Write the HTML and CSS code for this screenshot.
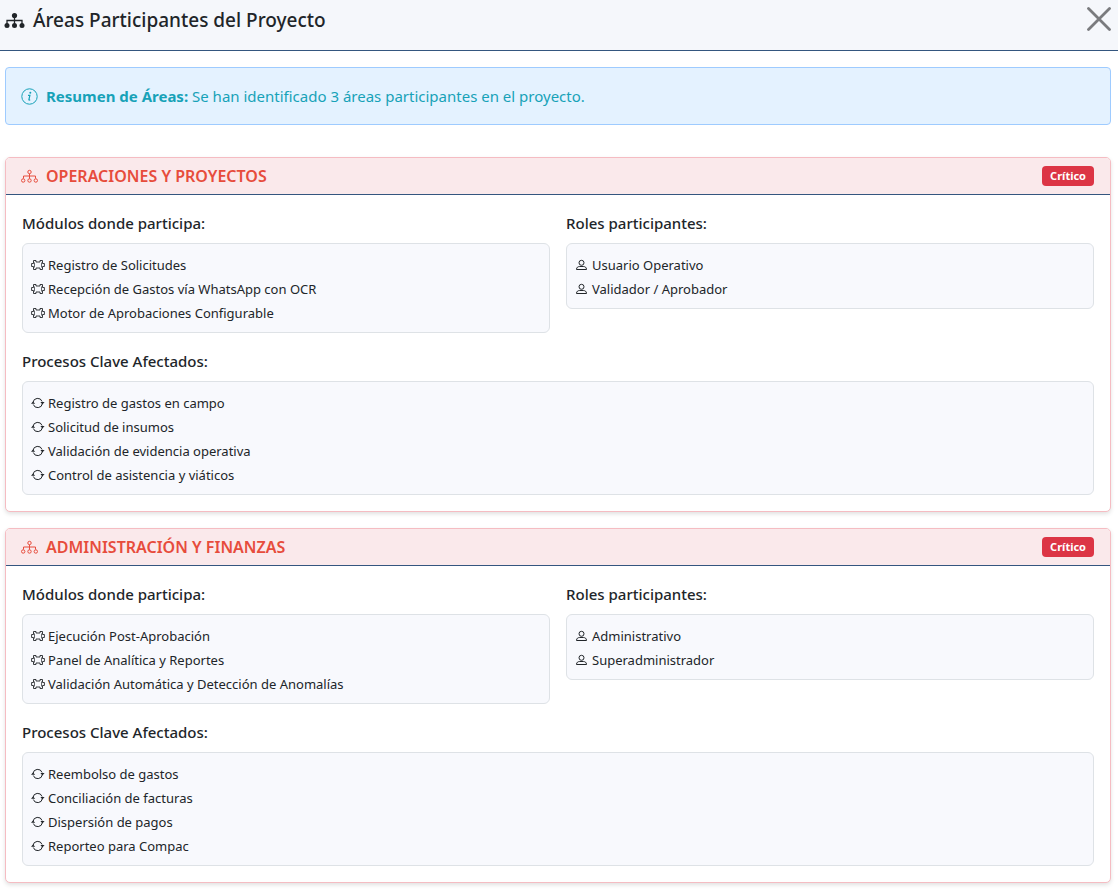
FILE: index.html
```html
<!DOCTYPE html>
<html lang="es">
<head>
<meta charset="UTF-8">
<meta name="viewport" content="width=device-width, initial-scale=1.0">
<title>Áreas Participantes del Proyecto</title>
<link rel="stylesheet" href="styles.css">
</head>
<body>

<!-- Shared icons -->
<svg class="sprite" aria-hidden="true">
  <symbol id="sitemap" viewBox="0 0 17 14">
    <g fill="none" stroke="currentColor">
      <circle cx="8.5" cy="2.5" r="1.7"/>
      <circle cx="2.2" cy="11" r="1.7"/>
      <circle cx="8.5" cy="11" r="1.7"/>
      <circle cx="14.8" cy="11" r="1.7"/>
      <path d="M8.5 4.2v5M2.5 9V6.5h12V9"/>
    </g>
  </symbol>
  <symbol id="chip" viewBox="0 0 14 14">
    <path fill="none" stroke="currentColor" stroke-width="0.9" d="M2.5 5.500V2.500h2.500v1.500h4V2.500h2.500v3h1.900v3h-1.900v3H9V10H5v1.500H2.500v-3H.6v-3z"/>
    <path fill="none" stroke="currentColor" stroke-width="0.7" d="M3.500 4.500v5M10.500 4.500v5"/>
  </symbol>
  <symbol id="user" viewBox="0 0 14 14">
    <circle cx="6.5" cy="4.8" r="2.5" fill="none" stroke="currentColor"/>
    <path fill="none" stroke="currentColor" stroke-linejoin="round" d="M1.500 11.500c0-2.300 1.600-3 3.200-3h3.600c1.600 0 3.200.7 3.200 3z"/>
  </symbol>
  <symbol id="refresh" viewBox="0 0 14 14">
    <path fill="none" stroke="currentColor" d="M2 6.500a4.700 4.700 0 0 1 9.100-1M11.400 7.500a4.700 4.700 0 0 1-9.100 1"/>
    <path fill="currentColor" d="M0 7.800h4.200L2 5.500zM9.400 6h4.200l-2.200 2.500z"/>
  </symbol>
</svg>

<header class="modal-header">
  <h1 class="modal-title">
    <svg class="title-icon" viewBox="0 0 21 17" aria-hidden="true">
      <g fill="currentColor">
        <circle cx="10.5" cy="3.5" r="2.6"/>
        <circle cx="3" cy="13.5" r="2.5"/>
        <circle cx="10.5" cy="13.5" r="2.5"/>
        <circle cx="18" cy="13.5" r="2.5"/>
      </g>
      <path fill="none" stroke="currentColor" stroke-width="1.3" d="M10.500 3v10M3 13V8.500h15V13"/>
    </svg>
    Áreas Participantes del Proyecto
  </h1>
  <button type="button" class="btn-close" aria-label="Cerrar">
    <svg viewBox="0 0 24 24" aria-hidden="true"><path fill="none" stroke="currentColor" stroke-width="2.800" stroke-linecap="round" d="M1.500 1.500l21 21M22.500 1.500l-21 21"/></svg>
  </button>
</header>

<main class="modal-body">
  <div class="alert">
    <svg class="icon" viewBox="0 0 17 17" aria-hidden="true">
      <circle cx="8.5" cy="8.5" r="7.7" fill="none" stroke="currentColor"/>
      <circle cx="9.3" cy="4.7" r="1" fill="currentColor"/>
      <path fill="none" stroke="currentColor" stroke-width="1.2" d="M7 7.300h1.900l-1 4.300c-.1.700.5.700 1.300.2"/>
    </svg>
    <p><strong>Resumen de Áreas:</strong> Se han identificado 3 áreas participantes en el proyecto.</p>
  </div>

  <section class="card">
    <div class="card-header">
      <svg class="icon" aria-hidden="true"><use href="#sitemap"/></svg>
      <h2>OPERACIONES Y PROYECTOS</h2>
      <span class="badge">Crítico</span>
    </div>
    <div class="card-body">
      <div>
        <h3>Módulos donde participa:</h3>
        <ul class="list">
          <li><svg aria-hidden="true"><use href="#chip"/></svg>Registro de Solicitudes</li>
          <li><svg aria-hidden="true"><use href="#chip"/></svg>Recepción de Gastos vía WhatsApp con OCR</li>
          <li><svg aria-hidden="true"><use href="#chip"/></svg>Motor de Aprobaciones Configurable</li>
        </ul>
      </div>
      <div>
        <h3>Roles participantes:</h3>
        <ul class="list">
          <li><svg aria-hidden="true"><use href="#user"/></svg>Usuario Operativo</li>
          <li><svg aria-hidden="true"><use href="#user"/></svg>Validador / Aprobador</li>
        </ul>
      </div>
      <div class="full">
        <h3>Procesos Clave Afectados:</h3>
        <ul class="list">
          <li><svg aria-hidden="true"><use href="#refresh"/></svg>Registro de gastos en campo</li>
          <li><svg aria-hidden="true"><use href="#refresh"/></svg>Solicitud de insumos</li>
          <li><svg aria-hidden="true"><use href="#refresh"/></svg>Validación de evidencia operativa</li>
          <li><svg aria-hidden="true"><use href="#refresh"/></svg>Control de asistencia y viáticos</li>
        </ul>
      </div>
    </div>
  </section>

  <section class="card">
    <div class="card-header">
      <svg class="icon" aria-hidden="true"><use href="#sitemap"/></svg>
      <h2>ADMINISTRACIÓN Y FINANZAS</h2>
      <span class="badge">Crítico</span>
    </div>
    <div class="card-body">
      <div>
        <h3>Módulos donde participa:</h3>
        <ul class="list">
          <li><svg aria-hidden="true"><use href="#chip"/></svg>Ejecución Post-Aprobación</li>
          <li><svg aria-hidden="true"><use href="#chip"/></svg>Panel de Analítica y Reportes</li>
          <li><svg aria-hidden="true"><use href="#chip"/></svg>Validación Automática y Detección de Anomalías</li>
        </ul>
      </div>
      <div>
        <h3>Roles participantes:</h3>
        <ul class="list">
          <li><svg aria-hidden="true"><use href="#user"/></svg>Administrativo</li>
          <li><svg aria-hidden="true"><use href="#user"/></svg>Superadministrador</li>
        </ul>
      </div>
      <div class="full">
        <h3>Procesos Clave Afectados:</h3>
        <ul class="list">
          <li><svg aria-hidden="true"><use href="#refresh"/></svg>Reembolso de gastos</li>
          <li><svg aria-hidden="true"><use href="#refresh"/></svg>Conciliación de facturas</li>
          <li><svg aria-hidden="true"><use href="#refresh"/></svg>Dispersión de pagos</li>
          <li><svg aria-hidden="true"><use href="#refresh"/></svg>Reporteo para Compac</li>
        </ul>
      </div>
    </div>
  </section>
</main>

</body>
</html>
```
FILE: styles.css
```css
* {
  box-sizing: border-box;
}

body {
  margin: 0;
  background-color: #fff;
  color: #212529;
  font-family: "Noto Sans", "Open Sans", sans-serif;
  font-size: 15px;
  line-height: 24px;
}

h1, h2, h3, p, ul {
  margin: 0;
  padding: 0;
}

.sprite {
  display: none;
}

.modal-header {
  display: flex;
  justify-content: space-between;
  align-items: flex-start;
  padding: 4px 7px 14px 4px;
  background-color: #f5f7fb;
  border-bottom: 1px solid #34567f;
}

.modal-title {
  display: flex;
  align-items: center;
  gap: 8px;
  font-size: 19px;
  font-weight: 500;
  line-height: 32px;
}

.title-icon {
  width: 21px;
  height: 17px;
}

.btn-close {
  display: flex;
  padding: 3px 0;
  border: none;
  background-color: transparent;
  color: #7a7b7e;
  cursor: pointer;
}

.btn-close svg {
  width: 24px;
  height: 24px;
}

.modal-body {
  padding: 16px 7px 8px 5px;
}

.alert {
  display: flex;
  align-items: center;
  gap: 8px;
  margin-bottom: 32px;
  padding: 16px 15px;
  border: 1px solid #9ecbff;
  border-radius: 4px;
  background-color: #e4f2ff;
  color: #17a2b8;
}

.icon {
  flex: none;
  width: 17px;
  height: 17px;
}

.card {
  margin-bottom: 16px;
  border: 1px solid #f5bcc2;
  border-radius: 5px;
  background-color: #fff;
  box-shadow: 0 2px 4px rgba(0, 0, 0, 0.12);
}

.card-header {
  display: flex;
  align-items: center;
  gap: 8px;
  padding: 6px 16px 6px 15px;
  border-bottom: 1px solid #34567f;
  border-radius: 4px 4px 0 0;
  background-color: #fae9eb;
  color: #e74c3c;
}

.card-header h2 {
  font-size: 16px;
  font-weight: 600;
}

.badge {
  margin-left: auto;
  padding: 0 8px;
  border-radius: 4px;
  background-color: #dc3545;
  color: #fff;
  font-size: 11px;
  font-weight: 700;
  line-height: 20px;
}

.card-body {
  display: grid;
  grid-template-columns: 1fr 1fr;
  align-items: start;
  gap: 16px;
  padding: 16px;
}

.full {
  grid-column: 1 / -1;
}

h3 {
  margin-bottom: 8px;
  font-size: 15px;
  font-weight: 500;
}

.list {
  padding: 9px 8px 7px;
  border: 1px solid #dee2e6;
  border-radius: 6px;
  background-color: #f8f9fd;
  font-size: 13px;
  list-style: none;
}

.list li {
  display: flex;
  align-items: center;
  gap: 3px;
}

.list svg {
  flex: none;
  width: 14px;
  height: 14px;
}
```
